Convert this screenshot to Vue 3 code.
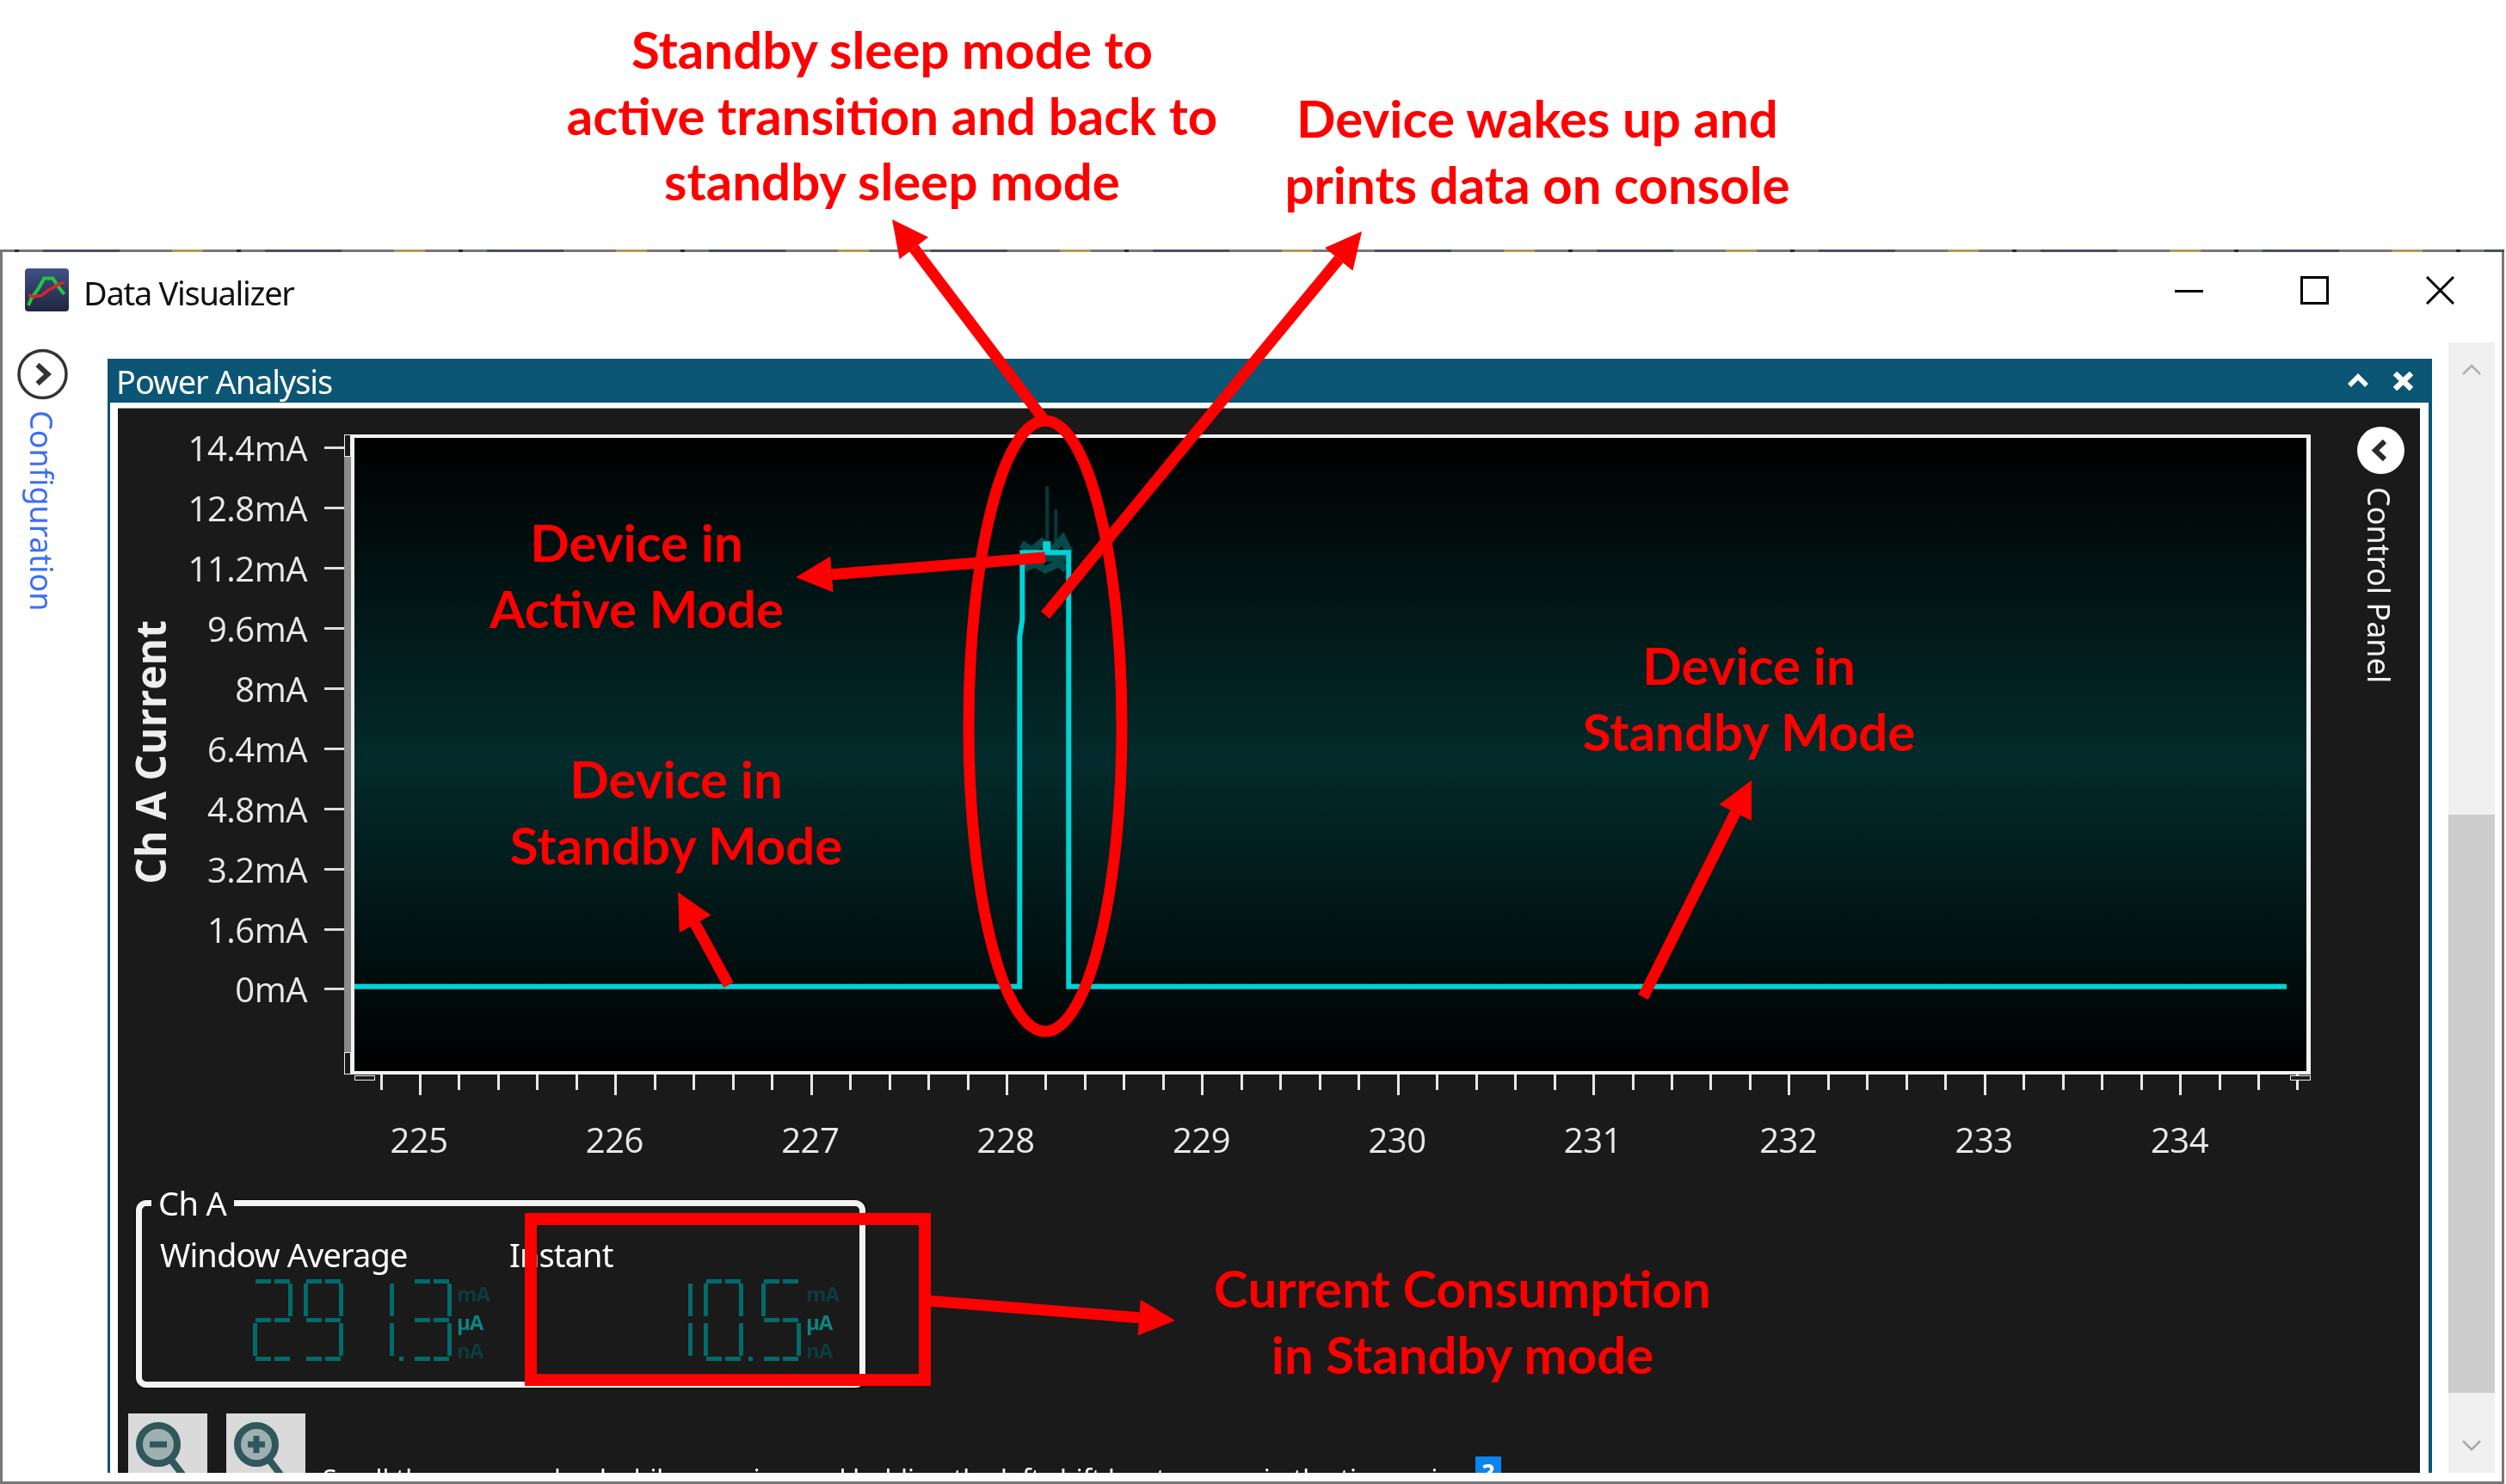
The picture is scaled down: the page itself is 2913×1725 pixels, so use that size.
<script setup>
const yLabels = ['14.4mA', '12.8mA', '11.2mA', '9.6mA', '8mA', '6.4mA', '4.8mA', '3.2mA', '1.6mA', '0mA']
const xLabels = [225, 226, 227, 228, 229, 230, 231, 232, 233, 234]
const xTicks = Array.from({ length: 50 }, (_, i) => i % 5 === 1)

const segMap = { 1: 'bc', 2: 'abged', 3: 'abgcd', 5: 'afgcd', 9: 'abcdfg', 0: 'abcdef', ' ': '' }

const segRects = (ch) => {
  const out = []
  for (const s of segMap[ch]) {
    if (s === 'a' || s === 'g' || s === 'd') {
      const y = s === 'a' ? 0 : s === 'g' ? 45 : 90
      out.push({ x: 3, y, w: 18, h: 5 }, { x: 25, y, w: 18, h: 5 })
    } else {
      const x = s === 'f' || s === 'e' ? 0 : 41
      const y = s === 'f' || s === 'b' ? 5 : 51
      out.push({ x, y, w: 5, h: 38 })
    }
  }
  return out
}

const readouts = [
  { label: 'Window Average', value: '291.3', digits: ['2', '9', '1', '3'] },
  { label: 'Instant', value: '10.5', digits: [' ', '1', '0', '5'] }
]

const notes = [
  { x: 1037, y: 19, lines: ['Standby sleep mode to', 'active transition and back to', 'standby sleep mode'] },
  { x: 1787, y: 99, lines: ['Device wakes up and', 'prints data on console'] },
  { x: 740, y: 592, lines: ['Device in', 'Active Mode'] },
  { x: 2033, y: 735, lines: ['Device in', 'Standby Mode'] },
  { x: 786, y: 867, lines: ['Device in', 'Standby Mode'] },
  { x: 1700, y: 1459, lines: ['Current Consumption', 'in Standby mode'] }
]

// tail and tip of each red arrow, page coordinates
const arrows = [
  [1215, 490, 1037, 255],
  [1215, 715, 1583, 269],
  [1215, 648, 925, 671],
  [847, 1145, 788, 1037],
  [1910, 1159, 2036, 907],
  [1078, 1512, 1366, 1535]
].map(([x1, y1, x2, y2]) => {
  const len = Math.hypot(x2 - x1, y2 - y1)
  const ux = (x2 - x1) / len
  const uy = (y2 - y1) / len
  const bx = x2 - ux * 42
  const by = y2 - uy * 42
  const head = [
    [x2, y2],
    [bx - uy * 21, by + ux * 21],
    [bx + uy * 21, by - ux * 21]
  ].map((p) => p.join(',')).join(' ')
  return { x1, y1, x2: bx, y2: by, head }
})
</script>

<template>
  <div class="page">
    <div class="window">
      <div class="edge"></div>
      <div class="titlebar">
        <svg class="app-icon" viewBox="0 0 51 50">
          <defs>
            <linearGradient id="appBg" x1="0" y1="0" x2="0" y2="1">
              <stop offset="0" stop-color="#3f5288" />
              <stop offset="1" stop-color="#21243f" />
            </linearGradient>
          </defs>
          <rect width="51" height="50" rx="4" fill="url(#appBg)" />
          <polyline points="4,43 7.4,35 15.7,23.3 22.4,11.6 32.4,11.6 39,21.6 45.7,30" fill="none" stroke="#1fc83c" stroke-width="4" />
          <polyline points="4,31 10.7,33 19,31.6 27.4,25 34,21.6 40.7,17.6 45.7,16.6" fill="none" stroke="#d8242c" stroke-width="3.5" />
        </svg>
        <span class="title">Data Visualizer</span>
        <div class="win-btns">
          <svg viewBox="0 0 33 33"><path d="M0 17.5H33" stroke="#000" stroke-width="3" /></svg>
          <svg viewBox="0 0 33 33"><rect x="1.5" y="1.5" width="30" height="30" fill="none" stroke="#000" stroke-width="3" /></svg>
          <svg viewBox="0 0 33 33"><path d="M1 1L32 32M32 1L1 32" stroke="#000" stroke-width="3" /></svg>
        </div>
      </div>

      <div class="body">
        <div class="rail">
          <svg class="rail-btn" viewBox="0 0 60 60">
            <circle cx="30" cy="30" r="27.5" fill="#fff" stroke="#333" stroke-width="3.5" />
            <path d="M24 19L36 30L24 41" fill="none" stroke="#333" stroke-width="6" />
          </svg>
          <span class="rail-text">Configuration</span>
        </div>

        <div class="panel">
          <div class="panel-head">
            <span>Power Analysis</span>
            <svg class="head-icons" viewBox="0 0 76 22">
              <path d="M2 16L12 6L22 16" fill="none" stroke="#fff" stroke-width="5.5" />
              <path d="M55 2L74 20M74 2L55 20" stroke="#fff" stroke-width="6.5" />
            </svg>
          </div>
          <div class="panel-inner">
            <div class="dark">
              <div class="chart-row">
                <div class="y-title">Ch A Current</div>
                <div class="y-col">
                  <div v-for="l in yLabels" :key="l" class="y-row">
                    <span>{{ l }}</span>
                    <i></i>
                  </div>
                </div>
                <div class="chart">
                  <div class="plot">
                    <i class="thumb"></i>
                    <i class="thumb low"></i>
                    <svg class="trace" viewBox="412 509 2271 736">
                      <g fill="none" stroke="#06494a">
                        <path d="M1218 565V632M1228 592V632" stroke-width="4" stroke="#063a3b" />
                        <path d="M1188 632L1200 640L1212 630L1224 640L1236 626L1244 642M1192 660L1204 655L1216 662L1232 654L1240 662M1200 648H1240" stroke-width="9" />
                      </g>
                      <path d="M412 1147H1186V740L1189 720V642H1216V632H1219V642H1243V1147H2660" fill="none" stroke="#00d2d5" stroke-width="6" />
                    </svg>
                  </div>
                  <div class="x-ticks">
                    <i v-for="(major, i) in xTicks" :key="i" :class="{ major }"></i>
                    <b class="end left"></b>
                    <b class="end right"></b>
                  </div>
                  <div class="x-labels">
                    <span v-for="l in xLabels" :key="l">{{ l }}</span>
                  </div>
                </div>
                <div class="side">
                  <svg class="side-btn" viewBox="0 0 55 55">
                    <circle cx="27.5" cy="27.5" r="27.5" fill="#fff" />
                    <path d="M32 17L21 27.5L32 38" fill="none" stroke="#2b2b2b" stroke-width="6" />
                  </svg>
                  <span class="side-text">Control Panel</span>
                </div>
              </div>

              <div class="group">
                <span class="legend">Ch A</span>
                <div v-for="r in readouts" :key="r.label" class="readout">
                  <div class="r-label">{{ r.label }}</div>
                  <div class="r-value" :aria-label="r.value">
                    <svg v-for="(d, i) in r.digits" :key="i" class="digit" viewBox="0 0 46 95">
                      <rect v-for="(s, j) in segRects(d)" :key="j" :x="s.x" :y="s.y" :width="s.w" :height="s.h" />
                      <rect v-if="i === 2" x="52" y="90" width="5" height="5" />
                    </svg>
                    <div class="units">
                      <span>mA</span>
                      <span class="on">µA</span>
                      <span>nA</span>
                    </div>
                  </div>
                </div>
              </div>

              <div class="tools">
                <button class="zoom-btn">
                  <svg viewBox="0 0 92 90">
                    <circle cx="35" cy="36" r="22" fill="#9fb0b2" stroke="#2f575c" stroke-width="8" />
                    <path d="M50 54L76 88" stroke="#2f575c" stroke-width="8" />
                    <path d="M25 36H45" stroke="#2f575c" stroke-width="7" />
                  </svg>
                </button>
                <button class="zoom-btn">
                  <svg viewBox="0 0 92 90">
                    <circle cx="35" cy="36" r="22" fill="#9fb0b2" stroke="#2f575c" stroke-width="8" />
                    <path d="M50 54L76 88" stroke="#2f575c" stroke-width="8" />
                    <path d="M25 36H45M35 26V46" stroke="#2f575c" stroke-width="7" />
                  </svg>
                </button>
                <span class="hint">Scroll the mouse wheel while zooming and holding the left shift key to zoom in the time axis</span>
                <span class="help">?</span>
              </div>
            </div>
          </div>
        </div>

        <div class="scrollbar">
          <svg viewBox="0 0 22 13"><path d="M1 12L11 2L21 12" fill="none" stroke="#b0b0b0" stroke-width="2.5" /></svg>
          <div class="scroll-track"><div class="scroll-thumb"></div></div>
          <svg viewBox="0 0 22 13"><path d="M1 1L11 11L21 1" fill="none" stroke="#a8a8a8" stroke-width="2.5" /></svg>
        </div>
      </div>
    </div>

    <svg class="marks" viewBox="0 0 2913 1725">
      <ellipse cx="1215" cy="844" rx="89" ry="355" fill="none" stroke="#f00" stroke-width="13" />
      <g v-for="(a, i) in arrows" :key="i">
        <line :x1="a.x1" :y1="a.y1" :x2="a.x2" :y2="a.y2" stroke="#f00" stroke-width="13" />
        <polygon :points="a.head" fill="#f00" />
      </g>
    </svg>
    <div class="red-box"></div>
    <div v-for="(n, i) in notes" :key="i" class="note" :style="{ left: n.x + 'px', top: n.y + 'px' }">
      <div v-for="t in n.lines" :key="t">{{ t }}</div>
    </div>
  </div>
</template>

<style>
html, body {
  margin: 0;
  background: #fff;
}
</style>

<style scoped>
.page {
  position: relative;
  width: 2913px;
  height: 1725px;
  padding-top: 290px;
  box-sizing: border-box;
  overflow: hidden;
  background: #fff;
  font-family: "Noto Sans", "Open Sans", sans-serif;
}
.window {
  width: 2911px;
  height: 1435px;
  box-sizing: border-box;
  border: 3px solid #777;
  border-top: 0;
  display: flex;
  flex-direction: column;
  filter: blur(0.7px);
}
.edge {
  height: 3px;
  flex: none;
  margin: 0 -3px;
  background: #777 linear-gradient(90deg, #777 17px, #2a2a2a 17px, #2a2a2a 22px, #777 22px, #777 50px, #46505c 50px, #46505c 139px, #777 139px, #777 200px, #b09a5a 200px, #b09a5a 236px, #777 236px) 0 0 / 258px 3px repeat-x;
}
.titlebar {
  height: 105px;
  flex: none;
  box-sizing: border-box;
  display: flex;
  align-items: flex-start;
  padding: 19px 55px 0 26px;
}
.app-icon {
  width: 51px;
  height: 50px;
}
.title {
  margin-left: 17px;
  font-size: 38px;
  line-height: 56px;
  letter-spacing: -1.3px;
  color: #111;
}
.win-btns {
  margin-left: auto;
  margin-top: 9px;
  display: flex;
  gap: 113px;
}
.win-btns svg {
  width: 33px;
  height: 33px;
}
.body {
  flex: 1;
  min-height: 0;
  display: flex;
  padding-bottom: 10px;
}
.rail {
  width: 122px;
  flex: none;
  display: flex;
  flex-direction: column;
  padding: 7px 0 0 16px;
  box-sizing: border-box;
}
.rail-btn {
  width: 61px;
  height: 60px;
}
.rail-text {
  align-self: flex-start;
  margin: 12px 0 0 9px;
  writing-mode: vertical-rl;
  font-size: 36px;
  line-height: 40px;
  color: #3c6ff5;
}
.panel {
  width: 2702px;
  flex: none;
  margin-top: 19px;
  display: flex;
  flex-direction: column;
  background: #0b5575;
}
.panel-head {
  height: 51px;
  flex: none;
  display: flex;
  align-items: center;
  justify-content: space-between;
  padding: 0 22px 0 10px;
  color: #fff;
  font-size: 38px;
  letter-spacing: -1.1px;
}
.head-icons {
  width: 76px;
  height: 22px;
}
.panel-inner {
  flex: 1;
  min-height: 0;
  margin: 0 4px 0 3px;
  padding: 7px 10px 0 9px;
  background: #fff;
  display: flex;
}
.dark {
  flex: 1;
  min-width: 0;
  overflow: hidden;
  background: #1a1a1a;
  border-top: 1px solid #999;
  margin-top: -1px;
  display: flex;
  flex-direction: column;
}
.chart-row {
  display: flex;
  align-items: flex-start;
  flex: none;
  height: 878px;
}
.y-title {
  width: 48px;
  margin: 246px 0 0 14px;
  writing-mode: vertical-rl;
  transform: rotate(180deg);
  font-family: "Open Sans", sans-serif;
  font-weight: 700;
  font-size: 48px;
  line-height: 48px;
  color: #eee;
  white-space: nowrap;
}
.y-col {
  width: 201px;
  padding-top: 11px;
  flex: none;
}
.y-row {
  height: 69.9px;
  display: flex;
  align-items: center;
  justify-content: flex-end;
  gap: 20px;
  font-family: "Open Sans", sans-serif;
  font-size: 40px;
  letter-spacing: -0.5px;
  color: #e8e8e8;
}
.y-row i {
  width: 23px;
  height: 3px;
  background: #ddd;
}
.chart {
  width: 2286px;
  flex: none;
  margin-top: 30px;
}
.plot {
  position: relative;
  height: 744px;
  box-sizing: border-box;
  border: 4px solid #f2f2f2;
  border-right-width: 5px;
  margin-left: 8px;
  background: linear-gradient(180deg, #000 0%, #032b2b 51%, #000 100%);
  box-shadow: -8px 0 0 #8a8a8a;
}
.thumb {
  position: absolute;
  left: -12px;
  top: -4px;
  width: 6px;
  height: 24px;
  background: #1a1a1a;
  border: 1px solid #eee;
}
.thumb.low {
  top: auto;
  bottom: -4px;
}
.trace {
  display: block;
  width: 100%;
  height: 100%;
}
.x-ticks {
  position: relative;
  height: 24px;
  margin-left: 41.5px;
  display: flex;
  align-items: flex-start;
}
.x-ticks i {
  width: 45.48px;
  flex: none;
}
.x-ticks i::before {
  content: "";
  display: block;
  width: 3px;
  height: 18px;
  background: #e8e8e8;
}
.x-ticks i.major::before {
  height: 24px;
}
.end {
  position: absolute;
  top: 1px;
  width: 24px;
  height: 6px;
  background: #1a1a1a;
  border: 1px solid #eee;
  box-sizing: border-box;
}
.end.left {
  left: -30px;
}
.end.right {
  right: 0;
}
.x-labels {
  margin: 22px 0 0 -26.7px;
  display: flex;
}
.x-labels span {
  width: 227.4px;
  flex: none;
  text-align: center;
  font-family: "Open Sans", sans-serif;
  font-size: 40px;
  line-height: 60px;
  letter-spacing: -0.5px;
  color: #e8e8e8;
}
.side {
  flex: 1;
  padding: 21px 0 0 54px;
  display: flex;
  flex-direction: column;
  align-items: flex-start;
}
.side-btn {
  width: 55px;
  height: 55px;
}
.side-text {
  margin: 15px 0 0 5px;
  writing-mode: vertical-rl;
  font-size: 36px;
  line-height: 40px;
  color: #f2f2f2;
  white-space: nowrap;
}
.group {
  position: relative;
  flex: none;
  width: 848px;
  height: 218px;
  margin: 42px 0 0 21px;
  box-sizing: border-box;
  border: 7px solid #f4f4f4;
  border-radius: 12px;
  box-shadow: 0 0 3px #000;
  padding: 36px 0 0 21px;
  display: grid;
  grid-template-columns: 406px 406px;
}
.legend {
  position: absolute;
  left: 11px;
  top: -27px;
  padding: 0 9px 0 8px;
  background: #1a1a1a;
  color: #fff;
  font-size: 38px;
  line-height: 46px;
  letter-spacing: -0.6px;
}
.r-label {
  height: 40px;
  font-size: 38px;
  line-height: 40px;
  letter-spacing: -0.9px;
  color: #fff;
  white-space: nowrap;
}
.r-value {
  margin: 9px 0 0 108px;
  display: flex;
  align-items: flex-start;
}
.digit {
  width: 46px;
  height: 95px;
  flex: none;
  margin-right: 13px;
  overflow: visible;
  fill: #036a6a;
}
.digit:nth-of-type(3) {
  margin-right: 21px;
}
.digit:nth-of-type(4) {
  margin-right: 6px;
}
.units {
  display: flex;
  flex-direction: column;
  font-family: "Open Sans", sans-serif;
  font-weight: 700;
  font-size: 24px;
  line-height: 33px;
  letter-spacing: -1px;
  color: #0c3c3c;
}
.units .on {
  color: #0a8585;
}
.tools {
  position: relative;
  flex: none;
  margin: 30px 0 0 12px;
  display: flex;
  gap: 22px;
  align-items: flex-start;
}
.zoom-btn {
  width: 92px;
  height: 90px;
  flex: none;
  padding: 0;
  border: 0;
  background: #dadada;
}
.zoom-btn svg {
  display: block;
  width: 92px;
  height: 90px;
}
.hint {
  margin: 56px 0 0 -2px;
  font-size: 30.4px;
  line-height: 40px;
  color: #fff;
  white-space: nowrap;
}
.help {
  position: absolute;
  left: 1566px;
  top: 50px;
  width: 30px;
  height: 40px;
  background: #0a84ee;
  color: #fff;
  text-align: center;
  font-size: 28px;
  font-weight: 700;
}
.scrollbar {
  width: 54px;
  flex: none;
  margin-left: 19px;
  background: #f0f0f0;
  display: flex;
  flex-direction: column;
  align-items: center;
}
.scrollbar svg {
  width: 22px;
  height: 13px;
  margin: 25px 0;
  flex: none;
}
.scroll-track {
  flex: 1;
  align-self: stretch;
  padding-top: 486px;
  min-height: 0;
}
.scroll-thumb {
  height: 672px;
  background: #cdcdcd;
}
.marks {
  position: absolute;
  left: 0;
  top: 0;
  width: 2913px;
  height: 1725px;
  pointer-events: none;
}
.red-box {
  position: absolute;
  left: 610px;
  top: 1410px;
  width: 472px;
  height: 201px;
  box-sizing: border-box;
  border: 14px solid #f00;
}
.note {
  position: absolute;
  transform: translateX(-50%);
  font-family: "Lato", "Open Sans", sans-serif;
  font-weight: 700;
  font-size: 60px;
  line-height: 76.5px;
  color: #f00;
  text-align: center;
  white-space: nowrap;
}
</style>
